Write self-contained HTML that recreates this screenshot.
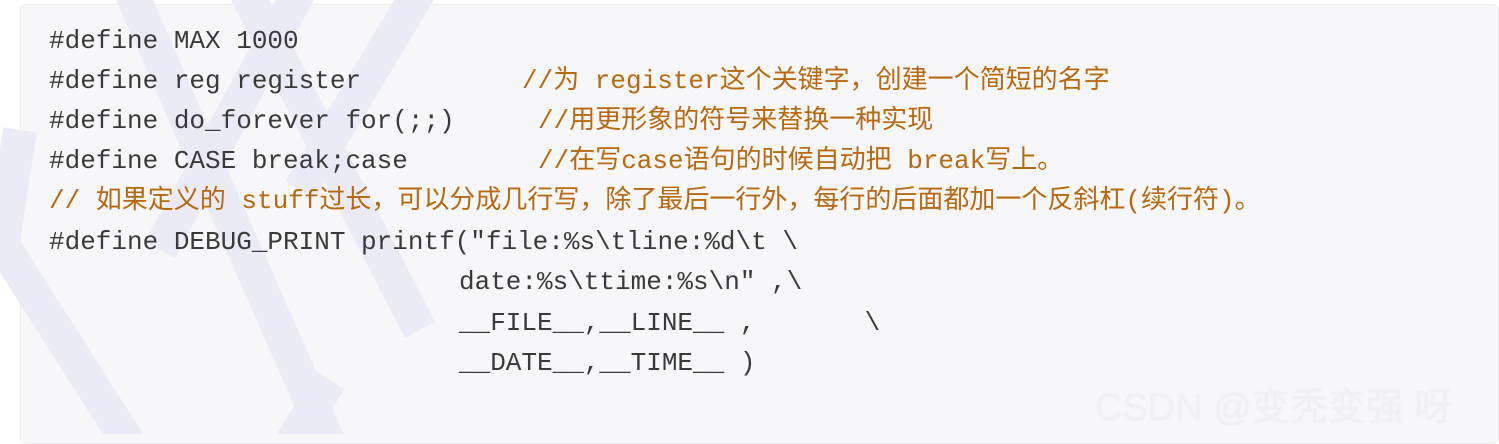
<!DOCTYPE html>
<html><head><meta charset="utf-8"><style>
html,body{margin:0;padding:0;width:1499px;height:434px;background:#fff;overflow:hidden}
.box{position:absolute;left:20px;top:4px;width:1479px;height:440px;background:#f7f7f9;border-radius:6px;border:1px solid #eeeef2;box-sizing:border-box}
svg{position:absolute;left:0;top:0}
.l{position:absolute;left:49px;font-family:"Liberation Mono","Noto Sans CJK SC",monospace;font-size:26px;line-height:40px;color:#3a3a3a;white-space:pre}
.c{color:#b8680e}
.wm{position:absolute;left:1095px;top:376px;font-family:"Liberation Sans","Noto Sans CJK SC",sans-serif;font-size:38px;color:#f1f1f3;text-shadow:0 0 1px #e6e6ea}
</style></head><body>
<div class="box"></div>
<svg width="1499" height="434">
<g stroke="#ebebf8" stroke-width="34" fill="none" stroke-linecap="butt">
<line x1="-10" y1="225" x2="130" y2="445"/>
<line x1="130" y1="-10" x2="330" y2="445"/>
<line x1="245" y1="-10" x2="420" y2="330"/>
<line x1="300" y1="-10" x2="160" y2="250"/>
<line x1="420" y1="-10" x2="300" y2="190"/>
<line x1="330" y1="380" x2="290" y2="445"/>
<line x1="20" y1="130" x2="0" y2="260"/>
</g>
</svg>
<div class="l" style="top:21px">#define MAX 1000</div>
<div class="l" style="top:61px">#define reg register</div>
<div class="l c" style="top:61px;left:522px">//为 register这个关键字，创建一个简短的名字</div>
<div class="l" style="top:101px">#define do_forever for(;;)</div>
<div class="l c" style="top:101px;left:538px">//用更形象的符号来替换一种实现</div>
<div class="l" style="top:141px">#define CASE break;case</div>
<div class="l c" style="top:141px;left:538px">//在写case语句的时候自动把 break写上。</div>
<div class="l c" style="top:181px">// 如果定义的 stuff过长，可以分成几行写，除了最后一行外，每行的后面都加一个反斜杠(续行符)。</div>
<div class="l" style="top:222px">#define DEBUG_PRINT printf("file:%s\tline:%d\t \</div>
<div class="l" style="top:262px;left:459px">date:%s\ttime:%s\n" ,\</div>
<div class="l" style="top:303px;left:459px">__FILE__,__LINE__ ,       \</div>
<div class="l" style="top:343px;left:459px">__DATE__,__TIME__ )</div>
<div class="wm">CSDN @变秃变强 呀</div>
</body></html>
